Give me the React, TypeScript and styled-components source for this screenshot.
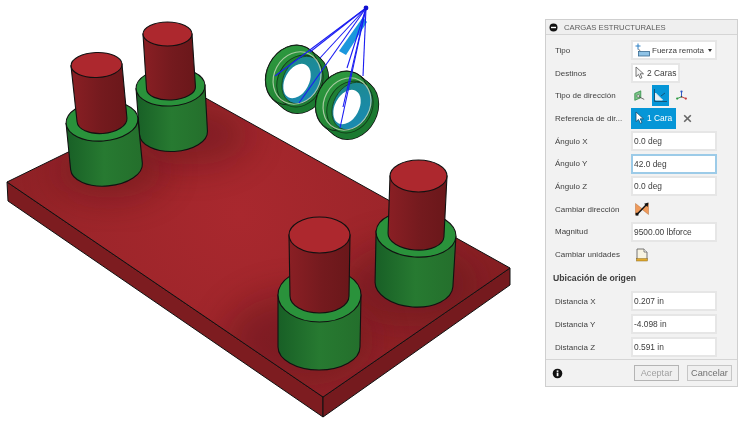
import React from "react"
import styled, { createGlobalStyle } from "styled-components"

const Global = createGlobalStyle`
  html, body {
    margin: 0;
    padding: 0;
    background: #fff;
    overflow: hidden;
  }
  body {
    font-family: "Liberation Sans", Arial, sans-serif;
  }
`

const Page = styled.div`
  display: flex;
  align-items: flex-start;
  width: 754px;
  height: 424px;
  filter: blur(0.3px);
`

const Viewport = styled.svg`
  display: block;
  flex: 0 0 545px;
  width: 545px;
  height: 424px;
`

const Panel = styled.section`
  flex: 0 0 193px;
  box-sizing: border-box;
  height: 368px;
  margin-top: 19px;
  display: flex;
  flex-direction: column;
  background: #f2f2f2;
  border: 1px solid #cfcfcf;
  color: #3f3f3f;
`

const Header = styled.header`
  flex: 0 0 14px;
  display: flex;
  align-items: center;
  gap: 6px;
  padding-left: 3px;
  background: #efefef;
  border-bottom: 1px solid #d5d5d5;
  font-size: 7.7px;
  color: #5c5c5c;
`

const Body = styled.div`
  flex: 1;
  display: grid;
  grid-template-rows: repeat(10, 22.7px) 24px repeat(3, 23px);
  padding-top: 4px;
`

const Row = styled.div`
  display: flex;
  align-items: center;
  padding-left: 9px;
`

const Label = styled.span`
  flex: 0 0 76px;
  font-size: 8px;
  white-space: nowrap;
  overflow: hidden;
`

const SectionTitle = styled.h3`
  margin: 0 0 0 -2px;
  font-size: 8.7px;
  font-weight: 700;
  color: #3c3c3c;
`

const Field = styled.div<{ $focused?: boolean }>`
  box-sizing: border-box;
  width: 86px;
  height: 20px;
  display: flex;
  align-items: center;
  padding-left: 1px;
  background: #fff;
  border: 2px solid ${p => (p.$focused ? "#9ccbe8" : "#e6e6e6")};
  font-size: 8.4px;
  color: #3c3c3c;
`

const Chip = styled.div<{ $active?: boolean }>`
  box-sizing: border-box;
  height: ${p => (p.$active ? "21px" : "20px")};
  display: flex;
  align-items: center;
  gap: 2px;
  padding: 0 2px;
  white-space: nowrap;
  background: ${p => (p.$active ? "#0696d7" : "#fff")};
  border: 2px solid ${p => (p.$active ? "#0696d7" : "#e6e6e6")};
  font-size: 8.4px;
  color: ${p => (p.$active ? "#fff" : "#3c3c3c")};
`

const Select = styled(Chip)`
  width: 86px;
  justify-content: space-between;
  padding-right: 3px;
  font-size: 8px;
`

const SelectValue = styled.span`
  display: flex;
  align-items: center;
  gap: 2px;
`

const Caret = styled.i`
  width: 0;
  height: 0;
  border-left: 2.5px solid transparent;
  border-right: 2.5px solid transparent;
  border-top: 3px solid #333;
`

const IconStrip = styled.div`
  display: flex;
  align-items: center;
  gap: 4px;
`

const ToolButton = styled.div<{ $active?: boolean }>`
  width: 17px;
  height: 21px;
  display: flex;
  align-items: center;
  justify-content: center;
  background: ${p => (p.$active ? "#0696d7" : "transparent")};
`

const ClearButton = styled.div`
  margin-left: 7px;
  display: flex;
`

const IconOnly = styled.div`
  margin-left: 2px;
  width: 17px;
  display: flex;
  justify-content: center;
`

const Footer = styled.footer`
  flex: 0 0 27px;
  display: flex;
  align-items: center;
  padding: 0 5px 0 6px;
  border-top: 1px solid #d5d5d5;
`

const FooterButton = styled.button<{ $disabled?: boolean }>`
  box-sizing: border-box;
  height: 16px;
  padding: 0;
  font-family: inherit;
  font-size: 9.2px;
  background: #efefef;
  border: 1px solid ${p => (p.$disabled ? "#b4b4b4" : "#c6c6c6")};
  color: ${p => (p.$disabled ? "#a0a0a0" : "#707070")};
`

const AcceptButton = styled(FooterButton)`
  width: 45px;
  margin-left: auto;
`

const CancelButton = styled(FooterButton)`
  width: 45px;
  margin-left: 8px;
`

type Ellipse = { cx: number; cy: number; rx: number; ry: number; rot?: number }

const cap = (e: Ellipse) => {
  const r = ((e.rot ?? 0) * Math.PI) / 180
  const dx = e.rx * Math.cos(r)
  const dy = e.rx * Math.sin(r)
  return { lx: e.cx - dx, ly: e.cy - dy, rx: e.cx + dx, ry: e.cy + dy }
}

const Tier = ({ top, bottom, body, face }: { top: Ellipse; bottom: Ellipse; body: string; face: string }) => {
  const a = cap(top)
  const b = cap(bottom)
  const side = `M${a.lx} ${a.ly} L${b.lx} ${b.ly} A${bottom.rx} ${bottom.ry} ${bottom.rot ?? 0} 0 0 ${b.rx} ${b.ry} L${a.rx} ${a.ry} Z`
  return (
    <g stroke="#111" strokeWidth="1.1">
      <path d={side} fill={body} />
      <ellipse
        cx={top.cx}
        cy={top.cy}
        rx={top.rx}
        ry={top.ry}
        fill={face}
        transform={`rotate(${top.rot ?? 0} ${top.cx} ${top.cy})`}
      />
    </g>
  )
}

const posts: { greenTop: Ellipse; greenBottom: Ellipse; redTop: Ellipse; redBottom: Ellipse; shadow: Ellipse }[] = [
  {
    greenTop: { cx: 170.5, cy: 87, rx: 34.5, ry: 19, rot: -3 },
    greenBottom: { cx: 173.5, cy: 133, rx: 34, ry: 18.5, rot: -3 },
    redTop: { cx: 167.5, cy: 34, rx: 24.5, ry: 12 },
    redBottom: { cx: 171, cy: 88, rx: 24.5, ry: 12, rot: -3 },
    shadow: { cx: 190, cy: 135, rx: 60, ry: 30 },
  },
  {
    greenTop: { cx: 102, cy: 121, rx: 36, ry: 20, rot: -4 },
    greenBottom: { cx: 106.5, cy: 166.5, rx: 36, ry: 19.5, rot: -5 },
    redTop: { cx: 96.5, cy: 65, rx: 25.5, ry: 12.5, rot: -2 },
    redBottom: { cx: 102, cy: 120, rx: 25, ry: 13.5, rot: -4 },
    shadow: { cx: 110, cy: 170, rx: 55, ry: 28 },
  },
  {
    greenTop: { cx: 416, cy: 234, rx: 40, ry: 23, rot: 4 },
    greenBottom: { cx: 414, cy: 284, rx: 39, ry: 23, rot: 4 },
    redTop: { cx: 418.5, cy: 176, rx: 28.5, ry: 16 },
    redBottom: { cx: 416, cy: 235, rx: 28, ry: 15, rot: 4 },
    shadow: { cx: 410, cy: 285, rx: 70, ry: 42 },
  },
  {
    greenTop: { cx: 319.5, cy: 295, rx: 41.5, ry: 27 },
    greenBottom: { cx: 319, cy: 347, rx: 41, ry: 23 },
    redTop: { cx: 319.5, cy: 235, rx: 30.5, ry: 18 },
    redBottom: { cx: 319.5, cy: 296, rx: 29.5, ry: 17 },
    shadow: { cx: 300, cy: 340, rx: 75, ry: 46 },
  },
]

const Ring = () => {
  const steps = [1, 0.8, 0.6, 0.4, 0.2, 0]
  const hull = (t: number) => ({ cx: 292 + 10 * t, cy: 75 + 8.5 * t })
  const tilt = (cx: number, cy: number) => `rotate(28 ${cx} ${cy})`
  return (
    <g>
      {steps.map(t => (
        <ellipse key={t} {...hull(t)} rx={25} ry={31} transform={tilt(hull(t).cx, hull(t).cy)} fill="#111" stroke="#111" strokeWidth="1.4" />
      ))}
      {steps.map(t => (
        <ellipse key={t} {...hull(t)} rx={25} ry={31} transform={tilt(hull(t).cx, hull(t).cy)} fill="#1c7a31" />
      ))}
      <ellipse cx={292} cy={75} rx={25} ry={31} transform={tilt(292, 75)} fill="url(#ringFace)" stroke="#111" strokeWidth="0.7" />
      <ellipse cx={300} cy={81} rx={22} ry={27} transform={tilt(300, 81)} fill="#1f8034" stroke="#123d1a" strokeWidth="0.9" />
      <ellipse cx={302} cy={80} rx={18.5} ry={25} transform={tilt(302, 80)} fill="url(#ringBore)" stroke="#123d1a" strokeWidth="0.7" />
      <ellipse cx={297} cy={81} rx={12} ry={18.5} transform={tilt(297, 81)} fill="#fff" />
      <ellipse cx={297} cy={78} rx={23} ry={27} transform={tilt(297, 78)} fill="none" stroke="#bcd4b2" strokeWidth="1.2" opacity="0.85" />
    </g>
  )
}

const loadLines: [number, number][] = [
  [275, 76],
  [299, 103],
  [310, 52],
  [320, 58],
  [340, 128],
  [343, 107],
  [347, 68],
  [363, 76],
]

const Model = () => (
  <Viewport viewBox="0 0 545 424">
    <defs>
      <radialGradient id="plateTop" gradientUnits="userSpaceOnUse" cx="240" cy="215" r="290">
        <stop offset="0" stopColor="#a9282e" />
        <stop offset="0.55" stopColor="#9c252a" />
        <stop offset="1" stopColor="#821e22" />
      </radialGradient>
      <linearGradient id="redBody" x1="0" x2="1" y1="0" y2="0">
        <stop offset="0" stopColor="#8a1f24" />
        <stop offset="0.55" stopColor="#741a1e" />
        <stop offset="1" stopColor="#6a171a" />
      </linearGradient>
      <linearGradient id="greenBody" x1="0" x2="1" y1="0" y2="0">
        <stop offset="0" stopColor="#185f26" />
        <stop offset="0.5" stopColor="#277a31" />
        <stop offset="1" stopColor="#246f2c" />
      </linearGradient>
      <linearGradient id="ringFace" x1="0" x2="1" y1="0" y2="1">
        <stop offset="0" stopColor="#2f9c40" />
        <stop offset="1" stopColor="#1f7f32" />
      </linearGradient>
      <linearGradient id="ringBore" x1="0" x2="1" y1="0" y2="1">
        <stop offset="0" stopColor="#1c8a88" />
        <stop offset="1" stopColor="#1a8ab8" />
      </linearGradient>
      <filter id="soft" x="-60%" y="-60%" width="220%" height="220%">
        <feGaussianBlur stdDeviation="18" />
      </filter>
      <clipPath id="plateClip">
        <polygon points="7,182 193,91 510,268 323,397" />
      </clipPath>
    </defs>

    <polygon points="7,182 323,397 323,417 8,201" fill="#7d1c20" stroke="#111" strokeWidth="1" />
    <polygon points="323,397 510,268 510,285 323,417" fill="#751a1e" stroke="#111" strokeWidth="1" />
    <polygon points="7,182 193,91 510,268 323,397" fill="url(#plateTop)" stroke="#111" strokeWidth="1" strokeLinejoin="round" />
    <g clipPath="url(#plateClip)">
      {posts.map(p => (
        <ellipse key={p.shadow.cx} cx={p.shadow.cx} cy={p.shadow.cy} rx={p.shadow.rx} ry={p.shadow.ry} fill="#4c0f12" opacity="0.38" filter="url(#soft)" />
      ))}
    </g>

    {posts.map(p => (
      <g key={p.redTop.cx}>
        <Tier top={p.greenTop} bottom={p.greenBottom} body="url(#greenBody)" face="#2a923b" />
        <Tier top={p.redTop} bottom={p.redBottom} body="url(#redBody)" face="#ad282e" />
      </g>
    ))}

    <Ring />
    <g transform="translate(50 26)">
      <Ring />
    </g>

    <polygon points="363,17 367,22 346,55 339,51" fill="#1b97dd" />
    <g stroke="#1a1cf2" strokeWidth="1.1">
      {loadLines.map(([x, y]) => (
        <line key={x} x1="366" y1="8" x2={x} y2={y} />
      ))}
    </g>
    <circle cx="366" cy="8" r="2.4" fill="#1010d0" />
  </Viewport>
)

const CollapseIcon = () => (
  <svg width="9" height="9" viewBox="0 0 9 9">
    <circle cx="4.5" cy="4.5" r="4" fill="#111" />
    <rect x="2" y="3.8" width="5" height="1.4" fill="#fff" />
  </svg>
)

const RemoteForceIcon = () => (
  <svg width="15" height="14" viewBox="0 0 15 14">
    <path d="M3 0.5v6M0.5 3h5" stroke="#2a7fc4" strokeWidth="1" fill="none" />
    <path d="M3.5 6l2 2.5" stroke="#555" strokeWidth="0.8" />
    <rect x="3.5" y="8.5" width="11" height="4.5" fill="#8fc3e6" stroke="#3a6a90" strokeWidth="0.8" />
  </svg>
)

const CursorIcon = ({ light }: { light?: boolean }) => (
  <svg width="10" height="14" viewBox="0 0 10 14">
    <path
      d="M1 1v9.6l2.5-2.2 1.8 4 1.7-.8-1.8-3.8h3.3z"
      fill={light ? "#fff" : "#f4f4f4"}
      stroke={light ? "#134e72" : "#555"}
      strokeWidth="0.8"
      strokeLinejoin="round"
    />
  </svg>
)

const PlaneDirectionIcon = () => (
  <svg width="13" height="12" viewBox="0 0 15 14">
    <path d="M2 4l7-3v8l-7 3z" fill="#7cc488" stroke="#2c8c44" strokeWidth="0.9" />
    <circle cx="6" cy="7" r="1.5" fill="#fff" stroke="#333" strokeWidth="0.6" />
    <path d="M7 8l6 3" stroke="#444" strokeWidth="0.9" />
  </svg>
)

const AngleDirectionIcon = () => (
  <svg width="15" height="15" viewBox="0 0 15 15">
    <path d="M1.5 1v12.5H14" stroke="#134e72" strokeWidth="0.9" fill="none" />
    <path d="M2.5 5l7 7h-7z" fill="#e9eef2" stroke="#e9eef2" strokeWidth="1" />
    <path d="M8 8l4-3" stroke="#134e72" strokeWidth="0.9" />
  </svg>
)

const TriadIcon = () => (
  <svg width="13" height="13" viewBox="0 0 15 15">
    <path d="M7.5 9V3" stroke="#2a55c4" strokeWidth="1.1" />
    <path d="M7.5 9l-5 2" stroke="#2e9a44" strokeWidth="1.1" />
    <path d="M7.5 9l5 2" stroke="#c43a3a" strokeWidth="1.1" />
    <circle cx="7.5" cy="3" r="1.3" fill="#2a55c4" />
    <circle cx="2.5" cy="11" r="1.3" fill="#2e9a44" />
    <circle cx="12.5" cy="11" r="1.3" fill="#c43a3a" />
    <circle cx="7.5" cy="9" r="0.9" fill="#333" />
  </svg>
)

const ClearIcon = () => (
  <svg width="9" height="9" viewBox="0 0 9 9">
    <path d="M1.2 1.2l6.6 6.6M7.8 1.2L1.2 7.8" stroke="#666" strokeWidth="1.6" />
  </svg>
)

const FlipIcon = () => (
  <svg width="14" height="14" viewBox="0 0 14 14">
    <path d="M0.5 1.5l7 5.5-7 5.5zM13.5 1.5L6.5 7l7 5.5z" fill="#f09a5a" stroke="#a85a22" strokeWidth="0.4" />
    <path d="M2 12.5L11.5 2.5" stroke="#111" strokeWidth="1.4" />
    <path d="M13.5 0.5l-1 4.5-3.4-3.3z" fill="#111" />
    <rect x="0.6" y="10.8" width="2.8" height="2.8" fill="#111" />
  </svg>
)

const UnitsIcon = () => (
  <svg width="12" height="14" viewBox="0 0 12 14">
    <path d="M1 1h7l3 3v7.5H1z" fill="#f7f3e2" stroke="#666" strokeWidth="0.9" strokeLinejoin="round" />
    <path d="M8 1v3h3" fill="#fff" stroke="#666" strokeWidth="0.8" />
    <rect x="0.6" y="10.6" width="10.8" height="2.4" fill="#e2a92c" stroke="#8a6a1c" strokeWidth="0.5" />
  </svg>
)

const InfoIcon = () => (
  <svg width="11" height="11" viewBox="0 0 11 11">
    <circle cx="5.5" cy="5.5" r="4.8" fill="#111" />
    <rect x="4.7" y="4.6" width="1.7" height="3.6" fill="#fff" />
    <rect x="4.7" y="2.4" width="1.7" height="1.5" fill="#fff" />
  </svg>
)

const inputRow = (label: string, value: string, focused?: boolean) => (
  <Row key={label}>
    <Label>{label}</Label>
    <Field $focused={focused}>{value}</Field>
  </Row>
)

export default function App() {
  return (
    <Page>
      <Global />
      <Model />
      <Panel>
        <Header>
          <CollapseIcon />
          CARGAS ESTRUCTURALES
        </Header>
        <Body>
          <Row>
            <Label>Tipo</Label>
            <Select>
              <SelectValue>
                <RemoteForceIcon />
                Fuerza remota
              </SelectValue>
              <Caret />
            </Select>
          </Row>
          <Row>
            <Label>Destinos</Label>
            <Chip>
              <CursorIcon />2 Caras
            </Chip>
          </Row>
          <Row>
            <Label>Tipo de dirección</Label>
            <IconStrip>
              <ToolButton>
                <PlaneDirectionIcon />
              </ToolButton>
              <ToolButton $active>
                <AngleDirectionIcon />
              </ToolButton>
              <ToolButton>
                <TriadIcon />
              </ToolButton>
            </IconStrip>
          </Row>
          <Row>
            <Label>Referencia de dir...</Label>
            <Chip $active>
              <CursorIcon light />1 Cara
            </Chip>
            <ClearButton>
              <ClearIcon />
            </ClearButton>
          </Row>
          {inputRow("Ángulo X", "0.0 deg")}
          {inputRow("Ángulo Y", "42.0 deg", true)}
          {inputRow("Ángulo Z", "0.0 deg")}
          <Row>
            <Label>Cambiar dirección</Label>
            <IconOnly>
              <FlipIcon />
            </IconOnly>
          </Row>
          {inputRow("Magnitud", "9500.00 lbforce")}
          <Row>
            <Label>Cambiar unidades</Label>
            <IconOnly>
              <UnitsIcon />
            </IconOnly>
          </Row>
          <Row>
            <SectionTitle>Ubicación de origen</SectionTitle>
          </Row>
          {inputRow("Distancia X", "0.207 in")}
          {inputRow("Distancia Y", "-4.098 in")}
          {inputRow("Distancia Z", "0.591 in")}
        </Body>
        <Footer>
          <InfoIcon />
          <AcceptButton $disabled>Aceptar</AcceptButton>
          <CancelButton>Cancelar</CancelButton>
        </Footer>
      </Panel>
    </Page>
  )
}
